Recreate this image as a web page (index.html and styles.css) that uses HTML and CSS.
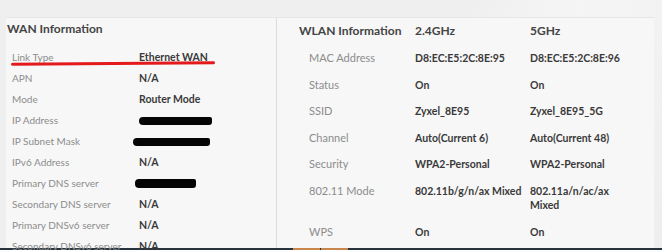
FILE: index.html
```html
<!DOCTYPE html>
<html lang="en">
<head>
  <meta charset="UTF-8" />
  <title>Status</title>
  <link rel="stylesheet" href="styles.css">
</head>
<body>
  <div class="topbar"></div>
  <div class="panel">
    <!-- WAN -->
    <div class="wan">
      <h2>WAN Information</h2>
      <div class="row marked">
        <span class="label">Link Type</span><span class="value">Ethernet WAN</span>
        <span class="redline"></span>
      </div>
      <div class="row"><span class="label">APN</span><span class="value">N/A</span></div>
      <div class="row"><span class="label">Mode</span><span class="value">Router Mode</span></div>
      <div class="row"><span class="label">IP Address</span><span class="value"><span class="blot b1"></span></span></div>
      <div class="row"><span class="label">IP Subnet Mask</span><span class="value"><span class="blot b2"></span></span></div>
      <div class="row"><span class="label">IPv6 Address</span><span class="value">N/A</span></div>
      <div class="row"><span class="label">Primary DNS server</span><span class="value"><span class="blot b3"></span></span></div>
      <div class="row"><span class="label">Secondary DNS server</span><span class="value">N/A</span></div>
      <div class="row"><span class="label">Primary DNSv6 server</span><span class="value">N/A</span></div>
      <div class="row"><span class="label">Secondary DNSv6 server</span><span class="value">N/A</span></div>
    </div>

    <!-- WLAN -->
    <div class="wlan">
      <div class="whead">
        <span>WLAN Information</span><span>2.4GHz</span><span>5GHz</span>
      </div>
      <div class="wrow"><span class="wlabel">MAC Address</span><span>D8:EC:E5:2C:8E:95</span><span>D8:EC:E5:2C:8E:96</span></div>
      <div class="wrow"><span class="wlabel">Status</span><span>On</span><span>On</span></div>
      <div class="wrow"><span class="wlabel">SSID</span><span>Zyxel_8E95</span><span>Zyxel_8E95_5G</span></div>
      <div class="wrow"><span class="wlabel">Channel</span><span>Auto(Current 6)</span><span>Auto(Current 48)</span></div>
      <div class="wrow"><span class="wlabel">Security</span><span>WPA2-Personal</span><span>WPA2-Personal</span></div>
      <div class="wrow"><span class="wlabel">802.11 Mode</span><span>802.11b/g/n/ax Mixed</span><span>802.11a/n/ac/ax Mixed</span></div>
      <div class="wrow"><span class="wlabel">WPS</span><span>On</span><span>On</span></div>
    </div>
  </div>
  <div class="footbar">
    <span class="tab"></span><span class="tab"></span>
  </div>
</body>
</html>
```

FILE: styles.css
```css
body {
  margin: 0;
  height: 250px;
  overflow: hidden;
  background: linear-gradient(115deg, #efefef 0%, #efefef 60%, #f5f5f5 75%, #eeeeee 100%);
  font-family: "Lato", "DejaVu Sans", sans-serif;
  color: #3a3a3a;
}
.topbar {
  height: 17px;
}
.panel {
  display: flex;
  margin: 0 8px 0 6px;
  height: 230px;
  background: #f7f7f7;
  border-top: 1px solid #e6e6e6;
}
.wan {
  width: 270px;
  padding-top: 4px;
}
.wan h2 {
  margin: 0 0 10px 1px;
  font-size: 12px;
  line-height: 14px;
  font-weight: bold;
  color: #444;
}
.row {
  position: relative;
  display: flex;
  align-items: center;
  height: 21px;
  padding-left: 6px;
}
.label {
  width: 127px;
  font-size: 10px;
  color: #8c8c8c;
}
.value {
  font-size: 10.5px;
  font-weight: bold;
  color: #3a3a3a;
}
.redline {
  position: absolute;
  left: 5px;
  top: 16px;
  width: 204px;
  height: 3px;
  background: #e3191b;
  border-radius: 2px;
  transform: rotate(-0.4deg);
}
.blot {
  display: inline-block;
  height: 8px;
  background: #050505;
  border-radius: 4px 2px 3px 4px;
  vertical-align: middle;
}
.b1 { width: 73px; }
.b2 { width: 77px; margin-left: -6px; height: 8px; }
.b3 { width: 61px; margin-left: -4px; height: 9px; }

.wlan {
  flex: 1;
  border-left: 1px solid #dcdcdc;
  padding-top: 6px;
}
.whead {
  display: grid;
  grid-template-columns: 116px 115px 100px;
  padding-left: 22px;
  line-height: 14px;
  font-size: 12px;
  font-weight: bold;
  color: #444;
  margin-bottom: 7px;
}
.wrow {
  display: grid;
  grid-template-columns: 106px 115px 100px;
  padding: 6px 0 6px 32px;
  line-height: 14.5px;
  font-size: 10.5px;
  font-weight: bold;
  color: #3a3a3a;
}
.wlabel {
  font-size: 11px;
  font-weight: normal;
  color: #8c8c8c;
}
.footbar {
  display: flex;
  height: 2px;
  background: #27343d;
  padding-left: 293px;
}
.tab {
  width: 27px;
  margin-right: 1px;
  background: #c8864a;
}
```
